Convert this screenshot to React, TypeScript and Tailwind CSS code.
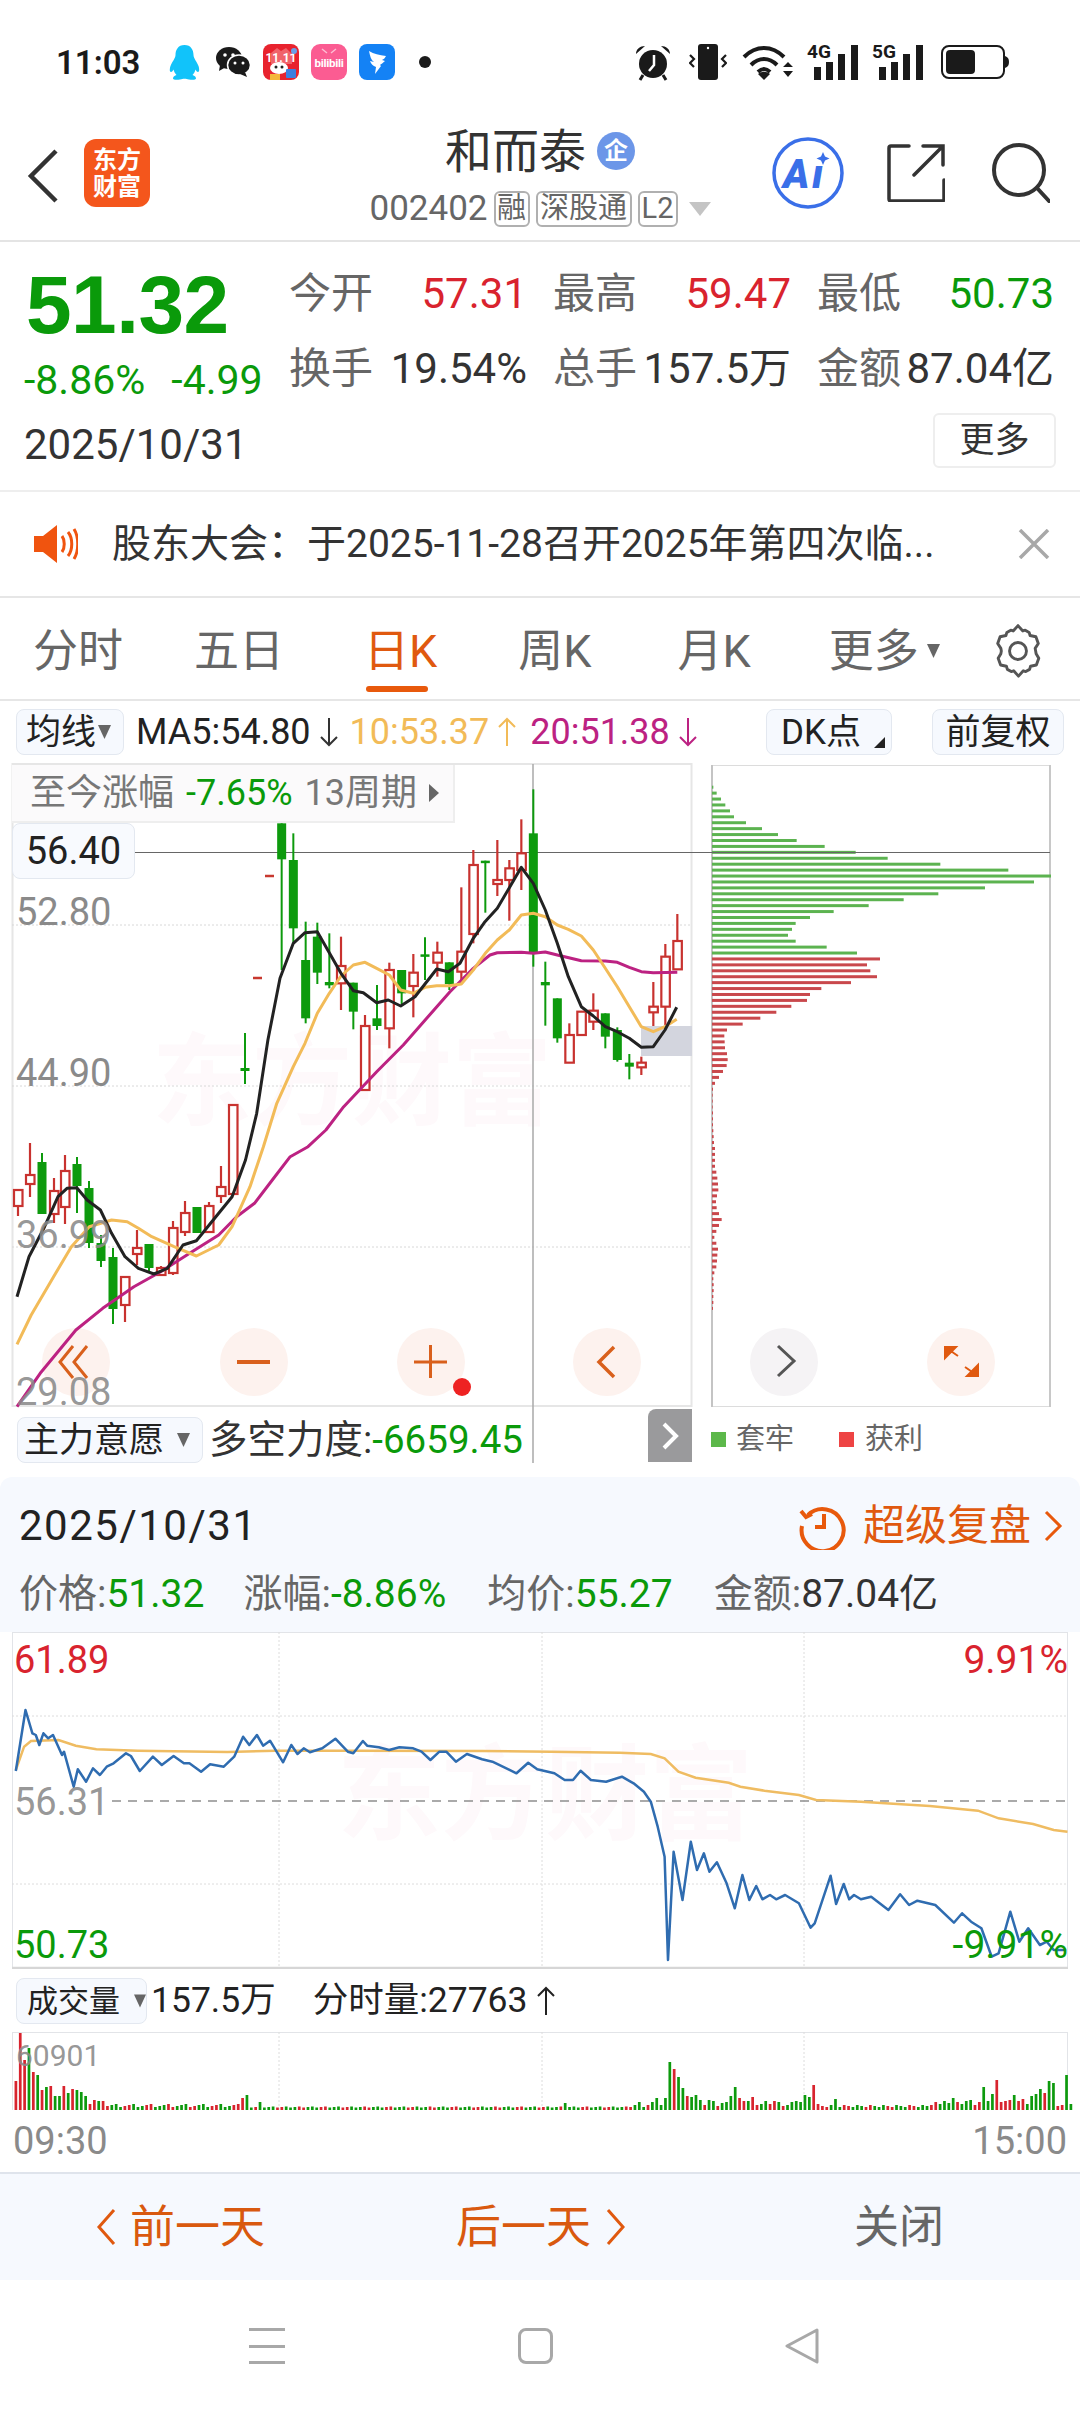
import React from 'react';

type Pt = number[];

// flat [x, y, x, y...] lists -> svg polyline points, with scale/offset per axis
const pts = (a: Pt, sx: number, ox: number, sy: number, oy: number) => {
  const out: string[] = [];
  for (let i = 0; i < a.length; i += 2) {
    out.push(`${(ox + a[i] / sx).toFixed(1)},${(oy + a[i + 1] / sy).toFixed(1)}`);
  }
  return out.join(' ');
};
const mainA = (a: Pt) => pts(a, 2.24, 0, 3, 1000);
const mainB = (a: Pt) => pts(a, 3, 260, 3, 780);
const day = (a: Pt) => pts(a, 1.452, 0, 3, 1480);

const ma5 =
  mainA([38, 890, 65, 770, 100, 680, 130, 590, 150, 565, 172, 563, 195, 600, 225, 630, 250, 700, 280, 770, 310, 805, 345, 822, 375, 805, 410, 735, 440, 722, 490, 640, 520, 590, 550, 480, 575, 340, 600, 120]) +
  ' ' +
  mainB([60, 595, 100, 490, 135, 458, 172, 455, 243, 580, 280, 632, 310, 638, 350, 668, 385, 660, 422, 678, 465, 650, 530, 567, 565, 575, 600, 550, 640, 475, 675, 425, 712, 385, 784, 262, 820, 310, 856, 390, 892, 490, 925, 590, 964, 680, 1000, 708, 1036, 740, 1072, 755, 1108, 775, 1144, 802, 1180, 800, 1215, 750, 1250, 682]);
const ma10 =
  mainA([38, 1033, 70, 945, 120, 830, 160, 740, 200, 680, 250, 660, 285, 665, 310, 685, 340, 710, 390, 740, 440, 768, 490, 735, 520, 680, 560, 560, 590, 440, 620, 310]) +
  ' ' +
  mainB([100, 860, 135, 790, 172, 700, 208, 640, 243, 588, 280, 555, 315, 547, 350, 565, 388, 585, 422, 630, 460, 640, 495, 622, 530, 617, 568, 617, 604, 612, 640, 570, 676, 520, 712, 480, 748, 450, 784, 405, 820, 400, 856, 410, 892, 435, 925, 448, 964, 468, 1000, 510, 1036, 565, 1072, 620, 1108, 680, 1144, 740, 1180, 755, 1215, 740, 1250, 718]);
const ma20 =
  mainA([38, 1220, 90, 1120, 170, 990, 230, 925, 300, 860, 360, 815, 430, 755, 490, 705, 530, 650, 570, 610, 610, 540, 650, 470, 690, 440, 730, 390, 770, 320]) +
  ' ' +
  mainB([350, 875, 430, 795, 500, 715, 570, 635, 640, 565, 690, 525, 712, 518, 784, 517, 820, 520, 856, 516, 892, 525, 964, 542, 1036, 543, 1072, 547, 1108, 562, 1144, 575, 1180, 578, 1252, 577]);

// [x, bodyTop, bodyBottom, wickTop, wickBottom, red?]
const firstCandles: number[][] = [
  [18, 1190, 1206, 1190, 1216, 1], [30, 1175, 1184, 1143, 1197, 1], [42, 1162, 1214, 1153, 1214, 0],
  [54, 1191, 1214, 1178, 1223, 1], [65, 1171, 1207, 1155, 1224, 1], [77, 1164, 1186, 1157, 1213, 0],
  [89, 1188, 1243, 1181, 1248, 0], [101, 1243, 1261, 1235, 1267, 0], [113, 1257, 1309, 1248, 1324, 0],
  [125, 1277, 1305, 1277, 1322, 1], [137, 1248, 1254, 1230, 1265, 1], [149, 1244, 1268, 1244, 1271, 0],
  [161, 1268, 1275, 1266, 1275, 1], [173, 1228, 1273, 1221, 1275, 1], [185, 1213, 1232, 1201, 1236, 1],
  [197, 1207, 1233, 1207, 1233, 0], [209, 1206, 1232, 1202, 1233, 1], [221, 1187, 1196, 1166, 1203, 1],
  [233, 1105, 1194, 1105, 1194, 1], [245, 1068, 1071, 1033, 1084, 0],
];
const laterCandles: number[][] = [
  [65, 130, 238, 130, 570, 0], [100, 240, 445, 160, 490, 0], [137, 540, 715, 425, 730, 0], [172, 470, 578, 428, 612, 0],
  [208, 606, 616, 460, 625, 0], [243, 558, 610, 470, 690, 1], [280, 608, 695, 608, 748, 0], [315, 738, 930, 705, 930, 1],
  [351, 715, 738, 615, 750, 0], [388, 570, 745, 548, 805, 1], [425, 570, 640, 570, 672, 0], [460, 578, 618, 522, 712, 1],
  [495, 523, 530, 472, 600, 0], [532, 518, 548, 485, 590, 1], [568, 547, 612, 547, 630, 0], [604, 515, 575, 322, 600, 1],
  [640, 255, 462, 210, 490, 1], [676, 242, 248, 242, 398, 0], [712, 300, 312, 180, 348, 1], [748, 265, 300, 240, 422, 1],
  [784, 220, 270, 118, 330, 1], [820, 160, 520, 28, 560, 0], [856, 606, 616, 545, 737, 0], [892, 655, 775, 655, 788, 0],
  [928, 765, 848, 730, 848, 1], [964, 695, 765, 695, 765, 1], [1000, 692, 725, 640, 750, 1], [1036, 700, 770, 700, 805, 0],
  [1072, 750, 840, 742, 845, 0], [1108, 848, 860, 822, 898, 0], [1144, 848, 862, 830, 885, 1], [1180, 680, 697, 606, 738, 1],
  [1216, 530, 680, 492, 735, 1], [1252, 483, 568, 402, 570, 1],
];
const candles = [
  ...firstCandles,
  ...laterCandles.map((c) => [260 + c[0] / 3, 780 + c[1] / 3, 780 + c[2] / 3, 780 + c[3] / 3, 780 + c[4] / 3, c[5]]),
];

// chip distribution, right end of each bar
const chipsGreen = [187, 197, 210, 223, 237, 249, 285, 333, 381, 437, 521, 614, 710, 868, 1072, 1200, 1149, 1002, 862, 758, 653, 548, 477, 434, 423, 411, 434, 527, 618];
const chipsRed = [687, 648, 658, 678, 600, 511, 477, 468, 421, 376, 328, 275, 228, 220, 221, 222, 228, 230, 227, 216, 204, 192, 186, 185, 185, 185, 186, 186, 186, 187, 188, 189, 192, 192, 192, 192, 196, 199, 201, 202, 198, 195, 197, 204, 212, 204, 196, 190, 196, 201, 199, 198, 196, 190, 187, 188, 188, 187, 187, 186];
const chips = [...chipsGreen.map((v) => ({ v, red: false })), ...chipsRed.map((v) => ({ v, red: true }))];

const priceLine = [23, 873, 37, 690, 47, 760, 52, 765, 57, 795, 63, 760, 70, 775, 77, 765, 90, 825, 93, 815, 107, 920, 113, 868, 125, 905, 135, 865, 145, 885, 155, 860, 165, 850, 183, 820, 190, 828, 203, 873, 222, 830, 235, 855, 252, 828, 267, 850, 275, 850, 292, 875, 305, 853, 325, 860, 340, 830, 353, 770, 362, 795, 373, 765, 382, 797, 392, 782, 411, 847, 423, 795, 432, 822, 441, 805, 450, 817, 468, 805, 487, 776, 505, 815, 513, 820, 527, 783, 533, 797, 550, 802, 565, 810, 580, 802, 600, 805, 612, 815, 625, 840, 638, 815, 648, 815, 662, 845, 678, 822, 700, 838, 715, 845, 750, 880, 767, 848, 780, 868, 805, 880, 820, 900, 832, 900, 843, 872, 858, 900, 880, 905, 903, 890, 920, 910, 935, 935, 945, 965, 955, 1040, 965, 1130, 970, 1440, 978, 1115, 991, 1260, 1003, 1085, 1012, 1170, 1022, 1120, 1030, 1175, 1041, 1147, 1055, 1210, 1067, 1285, 1078, 1185, 1088, 1260, 1098, 1218, 1107, 1258, 1118, 1245, 1127, 1258, 1140, 1245, 1160, 1270, 1177, 1343, 1183, 1330, 1206, 1187, 1214, 1272, 1225, 1212, 1233, 1258, 1240, 1245, 1250, 1258, 1265, 1250, 1290, 1290, 1307, 1243, 1320, 1275, 1332, 1262, 1358, 1275, 1385, 1328, 1397, 1300, 1410, 1325, 1425, 1345, 1440, 1430, 1450, 1420, 1467, 1295, 1480, 1385, 1493, 1345, 1510, 1395, 1520, 1385, 1530, 1410, 1548, 1410];
const avgLine = [23, 870, 35, 800, 45, 783, 85, 780, 110, 797, 140, 808, 200, 812, 330, 816, 400, 812, 500, 812, 700, 813, 800, 815, 900, 818, 945, 822, 965, 835, 985, 875, 1010, 893, 1058, 908, 1075, 920, 1110, 932, 1160, 945, 1185, 960, 1250, 965, 1350, 978, 1420, 992, 1450, 1015, 1500, 1032, 1530, 1050, 1550, 1055];

// minute volume: the spikes are listed, the quiet minutes are filled in
const volPeaks: [number, number, number][] = [
  [23, 29, 1], [30, 77, 1], [36, 50, 1], [43, 62, 0], [49, 38, 1], [55, 35, 0], [61, 20, 1], [67, 23, 0], [73, 24, 1], [80, 14, 0], [86, 14, 0], [92, 24, 1], [98, 17, 0], [105, 21, 1], [111, 20, 0], [118, 18, 0], [124, 14, 0], [130, 6, 1], [136, 10, 1], [142, 9, 0], [148, 9, 1],
  [355, 12, 1], [361, 15, 0], [378, 8, 0], [820, 7, 0], [930, 8, 0], [945, 8, 0], [952, 12, 0], [965, 12, 0], [971, 48, 0], [977, 41, 1], [983, 33, 0], [990, 22, 0], [996, 14, 1], [1003, 13, 0], [1009, 15, 0], [1016, 10, 0], [1022, 5, 1], [1028, 10, 0], [1035, 9, 0], [1041, 4, 1], [1047, 7, 0], [1054, 8, 0], [1060, 14, 0], [1067, 23, 0], [1073, 12, 1], [1079, 9, 1], [1086, 9, 0], [1092, 13, 1], [1098, 5, 1], [1105, 6, 0], [1111, 9, 0], [1117, 6, 1], [1124, 9, 1], [1130, 8, 0], [1136, 4, 1], [1143, 5, 0], [1149, 8, 0], [1155, 9, 0], [1161, 8, 0], [1168, 15, 0], [1174, 13, 0], [1181, 25, 1], [1187, 6, 1], [1213, 11, 0],
  [1385, 12, 0], [1410, 10, 0], [1430, 23, 0], [1442, 16, 0], [1448, 30, 1], [1455, 8, 1], [1461, 9, 1], [1467, 10, 1], [1474, 15, 0], [1480, 9, 1], [1486, 11, 1], [1499, 14, 0], [1505, 16, 0], [1511, 21, 0], [1517, 17, 1], [1524, 29, 0], [1530, 27, 0], [1536, 4, 1], [1549, 35, 0],
];
const volBars = Array.from({ length: 243 }, (_, i) => {
  const zx = 23 + i * 6.33;
  const hit = volPeaks.find((p) => Math.abs(p[0] - zx) < 3.2);
  if (hit) return { x: zx / 1.452, h: hit[1], red: hit[2] === 1 };
  const h = zx < 350 ? 3 + ((i * 37) % 4) : zx < 910 ? 2.5 + ((i * 13) % 3) * 0.5 : zx < 1350 ? 3 + ((i * 17) % 3) : 5 + ((i * 23) % 5);
  return { x: zx / 1.452, h, red: (i * 11) % 5 < 2 };
});

const Caret = ({ className = '' }: { className?: string }) => (
  <svg width="13" height="14" viewBox="0 0 13 14" className={className}>
    <path d="M0 0h13L6.5 14z" fill="#666" />
  </svg>
);

const Arrow = ({ color, up }: { color: string; up?: boolean }) => (
  <svg width="20" height="30" viewBox="0 0 20 30" className="ml-[8px] shrink-0">
    <path d={up ? 'M10 29V2M2 10l8-8 8 8' : 'M10 1v27M2 20l8 8 8-8'} fill="none" stroke={color} strokeWidth="2" />
  </svg>
);

const StatusLeft = () => (
  <div className="flex items-center">
    {/* QQ */}
    <svg width="31" height="35" viewBox="0 0 31 35" className="ml-[28px]">
      <path d="M15.5 0C9 0 6.5 5 6.5 10c0 3-3.5 7-5 11-1 3-1 6 .5 6 1 0 2-1.5 2.5-2.500.5 2 1.500 4 3 5.500C5 31 4 32 4 33.500 4 35 8 35 11 34.500c2-.3 2.700-.8 4.500-.8s2.500.5 4.500.8c3 .5 7 .5 7-1 0-1.500-1-2.500-3.500-3.500 1.500-1.500 2.500-3.500 3-5.500.5 1 1.500 2.500 2.500 2.500 1.500 0 1.500-3 .5-6-1.500-4-5-8-5-11C24.500 5 22 0 15.500 0z" fill="#11c3fa" />
    </svg>
    {/* WeChat */}
    <svg width="34" height="30" viewBox="0 0 34 30" className="ml-[16px]">
      <ellipse cx="13" cy="11" rx="13" ry="11" fill="#1a1a1a" />
      <path d="M4 18l-1 6 7-4z" fill="#1a1a1a" />
      <ellipse cx="23" cy="18" rx="11.500" ry="10" fill="#1a1a1a" stroke="#fff" strokeWidth="1.500" />
      <path d="M29 25l2 5-7-3z" fill="#1a1a1a" />
      <circle cx="9" cy="8" r="1.800" fill="#fff" />
      <circle cx="17" cy="8" r="1.800" fill="#fff" />
      <circle cx="19" cy="16" r="1.500" fill="#fff" />
      <circle cx="27" cy="16" r="1.500" fill="#fff" />
    </svg>
    {/* shopping festival app */}
    <svg width="36" height="36" viewBox="0 0 36 36" className="ml-[13px]">
      <rect width="36" height="36" rx="8" fill="#e8232e" />
      <path d="M8 9l6-5 4 3 5-3 6 6v10H8z" fill="#f0636a" />
      <text x="18" y="18" textAnchor="middle" fontSize="12" fontWeight="700" fill="#fff" fontFamily="Roboto">11.11</text>
      <ellipse cx="16" cy="24" rx="9" ry="6" fill="#fff" />
      <circle cx="13" cy="23" r="1.500" fill="#222" />
      <circle cx="19" cy="23" r="1.500" fill="#222" />
      <rect x="23" y="25" width="10" height="9" rx="1" fill="#3d7fe0" />
      <rect x="7" y="30" width="10" height="6" fill="#f4b73a" />
      <circle cx="31" cy="7" r="3" fill="#6aa0e8" />
    </svg>
    {/* bilibili */}
    <svg width="36" height="36" viewBox="0 0 36 36" className="ml-[12px]">
      <rect width="36" height="36" rx="9" fill="#fb5c92" />
      <path d="M11 5l5 4M25 5l-5 4" stroke="#fff" strokeOpacity=".6" strokeWidth="1.500" />
      <text x="18" y="23" textAnchor="middle" fontSize="11.500" fontWeight="700" fill="#fff" fontFamily="Roboto" letterSpacing="-.3">bilibili</text>
    </svg>
    {/* blue wing app */}
    <svg width="36" height="36" viewBox="0 0 36 36" className="ml-[12px]">
      <rect width="36" height="36" rx="8" fill="#1482f5" />
      <path d="M10 7c5 3 10 4 17 5-1 2-2 3-4 4l3 1c-2 2-4 3-5 4l1 1-6 8 1-7c-3-1-5-3-6-6 1 0 3 1 4 1-3-2-4-6-5-11z" fill="#fff" />
    </svg>
    <span className="ml-[24px] h-[12px] w-[12px] rounded-full bg-[#1a1a1a]" />
  </div>
);

const StatusRight = () => (
  <div className="flex items-center">
    {/* alarm */}
    <svg width="38" height="38" viewBox="0 0 38 38">
      <circle cx="19" cy="21" r="14" fill="#1a1a1a" />
      <path d="M2 11c0-5 4-8 9-8zM36 11c0-5-4-8-9-8z" fill="#1a1a1a" />
      <path d="M9 32l-3 5M29 32l3 5" stroke="#1a1a1a" strokeWidth="3" />
      <path d="M20 12v10l-5 6" stroke="#fff" strokeWidth="2.500" fill="none" />
    </svg>
    {/* vibrate */}
    <svg width="38" height="36" viewBox="0 0 38 36" className="ml-[17px]">
      <rect x="9" y="0" width="20" height="36" rx="3" fill="#1a1a1a" />
      <circle cx="19" cy="4" r="1.200" fill="#fff" />
      <path d="M1 11l4 4-4 4 4 4M37 11l-4 4 4 4-4 4" stroke="#1a1a1a" strokeWidth="2.200" fill="none" />
    </svg>
    {/* wifi */}
    <svg width="52" height="38" viewBox="0 0 52 38" className="ml-[15px]">
      <path d="M2 14C14 2 30 2 42 14M9 22c8-8 18-8 26 0M16 29c4-4 8-4 12 0" stroke="#1a1a1a" strokeWidth="4" fill="none" />
      <path d="M22 37l-6-6c4-3 8-3 12 0z" fill="#1a1a1a" />
      <path d="M41 24h10l-5-5zM41 28h10l-5 6z" fill="#1a1a1a" />
    </svg>
    {/* 4G */}
    <svg width="52" height="38" viewBox="0 0 52 38" className="ml-[13px] overflow-visible">
      <text x="0" y="15" fontSize="18" fontWeight="700" fontFamily="Roboto" fill="#1a1a1a" textLength="24" lengthAdjust="spacingAndGlyphs">4G</text>
      <path d="M7 37V24h7v13zM19 37V19h7v18zM31 37V11h7v26zM44 37V2h7v35z" fill="#1a1a1a" />
    </svg>
    {/* 5G */}
    <svg width="52" height="38" viewBox="0 0 52 38" className="ml-[13px] overflow-visible">
      <text x="0" y="15" fontSize="18" fontWeight="700" fontFamily="Roboto" fill="#1a1a1a" textLength="24" lengthAdjust="spacingAndGlyphs">5G</text>
      <path d="M7 37V24h7v13zM19 37V19h7v18zM31 37V11h7v26zM44 37V2h7v35z" fill="#1a1a1a" />
    </svg>
    {/* battery */}
    <svg width="68" height="34" viewBox="0 0 68 34" className="ml-[17px]">
      <rect x="1" y="1" width="62" height="32" rx="7" fill="none" stroke="#1a1a1a" strokeWidth="2" />
      <rect x="5" y="5" width="29" height="24" rx="4" fill="#1a1a1a" />
      <path d="M64 11c3 1 4 3 4 6s-1 5-4 6z" fill="#1a1a1a" />
    </svg>
  </div>
);

const MainChart = () => (
  <svg width="1080" height="644" viewBox="0 763 1080 644" className="absolute left-0 top-0 overflow-visible">
    <rect x="12.500" y="764" width="679" height="642" fill="none" stroke="#e6e6e6" strokeWidth="2" />
    <rect x="711.500" y="765.500" width="338" height="641" fill="none" stroke="#dcdcdc" />
    <path d="M1050 765v642" stroke="#c8c8c8" strokeWidth="2" />
    <path d="M712 765v642" stroke="#c4c4c4" strokeWidth="2" />
    <path d="M12 925h680M12 1086h680M12 1247h680" stroke="#d8d8d8" strokeDasharray="2 2" />
    <rect x="641" y="1026" width="51" height="30" fill="#d3d5de" />

    {/* zoom buttons */}
    <circle cx="76" cy="1362" r="34" fill="#fdf2ee" />
    <circle cx="254" cy="1362" r="34" fill="#fdf2ee" />
    <circle cx="431" cy="1362" r="34" fill="#fdf2ee" />
    <circle cx="607" cy="1362" r="34" fill="#fdf2ee" />
    <circle cx="784" cy="1362" r="34" fill="#f5f3f5" />
    <circle cx="961" cy="1362" r="34" fill="#fdf2ee" />
    <path d="M73 1346l-13 16 13 16M87 1346l-13 16 13 16" fill="none" stroke="#d9601c" strokeWidth="3" />
    <path d="M237 1362h33" stroke="#d9601c" strokeWidth="4" />
    <path d="M414 1362h33M430.500 1345v33" stroke="#d9601c" strokeWidth="3" />
    <path d="M614 1347l-15 15 15 15" fill="none" stroke="#d9601c" strokeWidth="3.500" />
    <path d="M778 1346l16 15-16 15" fill="none" stroke="#555" strokeWidth="3" />
    <path d="M945 1347l13 9M945 1347v11l11-11zM978 1376l-13-9M978 1376v-11l-11 11z" fill="#e0590f" stroke="#e0590f" strokeWidth="2" />
    <circle cx="462" cy="1387" r="9" fill="#ee2222" />

    {chips.map((c, i) => {
      const y = 740 + (100 + i * 12.55) / 2.119;
      return (
        <rect key={i} x="712" y={y - 1.500} width={(c.v - 183) / 3} height="3" fill={c.red ? '#c9484c' : '#5cb350'} />
      );
    })}

    <path d="M135 852.500h915" stroke="#666" strokeWidth="1" />
    <path d="M533 764v699" stroke="#a8a8a8" strokeWidth="1.500" />
    <path d="M253 978h9M265 876h9" stroke="#c8382f" strokeWidth="2.500" />

    {candles.map((c, i) => {
      const [x, top, bot, wt, wb, red] = c;
      return red ? (
        <g key={i} stroke="#c8322f" strokeWidth="2.200">
          <path d={`M${x} ${wt}V${wb}`} />
          <rect x={x - 4} y={top} width="8.500" height={bot - top} fill="#fff" />
        </g>
      ) : (
        <g key={i}>
          <path d={`M${x} ${wt}V${wb}`} stroke="#0d9a0d" strokeWidth="2" />
          <rect x={x - 4.500} y={top} width="9" height={Math.max(bot - top, 2.500)} fill="#0d9a0d" />
        </g>
      );
    })}
    <polyline points={ma20} fill="none" stroke="#bc2282" strokeWidth="3" strokeLinejoin="round" />
    <polyline points={ma10} fill="none" stroke="#f2bb58" strokeWidth="3" strokeLinejoin="round" />
    <polyline points={ma5} fill="none" stroke="#222" strokeWidth="3" strokeLinejoin="round" />
  </svg>
);

const DayChart = () => (
  <svg width="1080" height="337" viewBox="0 1632 1080 337" className="absolute left-0 top-0">
    <rect x="12.500" y="1632.500" width="1055" height="335" fill="none" stroke="#e2e4e8" />
    <path d="M12 1968h1056" stroke="#d6d6d6" strokeWidth="2.500" />
    <path d="M279 1632v336M542 1632v336M804 1632v336M12 1716h1056M12 1884h1056" stroke="#dcdcdc" strokeDasharray="2 2" />
    <path d="M112 1801h955" stroke="#8f8f8f" strokeWidth="1.500" strokeDasharray="9 7" />
    <polyline points={day(avgLine)} fill="none" stroke="#efbc62" strokeWidth="2.500" />
    <polyline points={day(priceLine)} fill="none" stroke="#2f6cb0" strokeWidth="2.500" strokeLinejoin="round" />
  </svg>
);

const VolumeChart = () => (
  <svg width="1080" height="78" viewBox="0 2032 1080 78" className="absolute left-0 top-0">
    <rect x="12.500" y="2032.500" width="1055" height="78" fill="none" stroke="#e2e4e8" />
    <path d="M279 2032v78M542 2032v78M804 2032v78" stroke="#dcdcdc" strokeDasharray="2 2" />
    {volBars.map((b, i) => (
      <rect key={i} x={b.x - 1.300} y={2110 - b.h} width="2.700" height={b.h} fill={b.red ? '#d8242e' : '#0d9a0d'} />
    ))}
  </svg>
);

const Btn = ({ children, className = '' }: { children: React.ReactNode; className?: string }) => (
  <div className={`flex items-center rounded-lg border border-[#e3e8f0] bg-[#f6f9fe] ${className}`}>{children}</div>
);

export default function App() {
  return (
    <div className="relative flex h-[2412px] w-[1080px] flex-col overflow-hidden whitespace-nowrap bg-white leading-none text-[#222] [font-family:Roboto,'Noto_Sans_CJK_SC',sans-serif]">
      {/* status bar */}
      <div className="flex h-[100px] shrink-0 items-center justify-between pl-[56px] pr-[71px] pt-[24px]">
        <div className="flex items-center">
          <span className="w-[85px] text-[33px] font-semibold text-[#1a1a1a]">11:03</span>
          <StatusLeft />
        </div>
        <StatusRight />
      </div>

      {/* title bar */}
      <div className="grid h-[142px] shrink-0 grid-cols-[1fr_auto_1fr] items-center border-b-2 border-[#e4e4e4]">
        <div className="flex items-center pl-[27px] pt-[6px]">
          <svg width="32" height="54" viewBox="0 0 32 54" className="mt-[6px]">
            <path d="M29 2L4 27l25 25" fill="none" stroke="#333" strokeWidth="4.500" />
          </svg>
          <div className="ml-[25px] flex h-[68px] w-[66px] flex-col items-center justify-center gap-[3px] rounded-[12px] bg-[#f4561c] text-[24px] font-bold text-white">
            <span>东方</span>
            <span>财富</span>
          </div>
        </div>
        <div className="flex flex-col items-center pt-[14px]">
          <div className="flex items-center">
            <span className="text-[47px] text-[#333]">和而泰</span>
            <span className="ml-[11px] flex h-[38px] w-[38px] items-center justify-center rounded-full bg-[#6c96e8] text-[24px] font-bold text-white">企</span>
          </div>
          <div className="mt-[16px] flex items-center text-[#666]">
            <span className="text-[35px]">002402</span>
            <span className="ml-[6px] flex h-[36px] w-[36px] items-center justify-center rounded-md border-2 border-[#b0b0b0] text-[29px]">融</span>
            <span className="ml-[6px] flex h-[36px] w-[96px] items-center justify-center rounded-md border-2 border-[#b0b0b0] text-[29px]">深股通</span>
            <span className="ml-[6px] flex h-[36px] w-[40px] items-center justify-center rounded-md border-2 border-[#b0b0b0] text-[29px]">L2</span>
            <svg width="22" height="14" viewBox="0 0 22 14" className="ml-[11px]">
              <path d="M0 0h22L11 14z" fill="#c4c4c4" />
            </svg>
          </div>
        </div>
        <div className="flex items-center justify-end pr-[30px] pt-[6px]">
          <svg width="72" height="72" viewBox="0 0 72 72">
            <circle cx="36" cy="36" r="34" fill="none" stroke="#3a6fe8" strokeWidth="3.500" />
            <text x="11" y="51" fontSize="40" fontWeight="900" fontStyle="italic" fill="#3a6fe8" fontFamily="Roboto">A</text>
            <text x="40" y="51" fontSize="40" fontWeight="900" fontStyle="italic" fill="#3a6fe8" fontFamily="Roboto">ı</text>
            <path d="M51 15l2 4.500 4.500 2-4.500 2-2 4.500-2-4.500-4.500-2 4.500-2z" fill="#3a6fe8" />
          </svg>
          <svg width="58" height="58" viewBox="0 0 58 58" className="ml-[43px]">
            <path d="M22 2H4a2 2 0 0 0-2 2v51a2 2 0 0 0 2 2h51a2 2 0 0 0 2-2V36M27 31L55 3M36 2h20v19" fill="none" stroke="#333" strokeWidth="3.500" strokeLinecap="round" />
          </svg>
          <svg width="58" height="60" viewBox="0 0 58 60" className="ml-[47px]">
            <circle cx="27" cy="27" r="25" fill="none" stroke="#333" strokeWidth="4" />
            <path d="M45 45l12 13" stroke="#333" strokeWidth="4" strokeLinecap="round" />
          </svg>
        </div>
      </div>

      {/* quote */}
      <div className="relative flex h-[250px] shrink-0 border-b-2 border-[#eeeeee]">
        <div className="w-[289px] shrink-0 pl-[24px]">
          <div className="ml-[2px] mt-[22px] text-[82px] font-bold tracking-[-0.5px] text-[#0a9a0a] [font-family:'Liberation_Sans',sans-serif]">51.32</div>
          <div className="mt-[14px] flex text-[41px] text-[#0a9a0a]">
            <span>-8.86%</span>
            <span className="ml-[26px]">-4.99</span>
          </div>
          <div className="mt-[23px] text-[42px] text-[#333]">2025/10/31</div>
        </div>
        <div className="pt-[31px]">
          <div className="grid grid-cols-[264px_264px_237px] text-[42px] text-[#666]">
            <div className="flex justify-between pr-[26px]"><span>今开</span><span className="text-[#d9232e]">57.31</span></div>
            <div className="flex justify-between pr-[26px]"><span>最高</span><span className="text-[#d9232e]">59.47</span></div>
            <div className="flex justify-between"><span>最低</span><span className="text-[#0a9a0a]">50.73</span></div>
          </div>
          <div className="mt-[33px] grid grid-cols-[264px_264px_237px] text-[42px] text-[#666]">
            <div className="flex justify-between pr-[26px]"><span>换手</span><span className="text-[#333]">19.54%</span></div>
            <div className="flex justify-between pr-[26px]"><span>总手</span><span className="text-[#333]">157.5万</span></div>
            <div className="flex justify-between"><span>金额</span><span className="text-[#333]">87.04亿</span></div>
          </div>
        </div>
        <div className="absolute left-[933px] top-[171px] flex h-[55px] w-[123px] items-center justify-center rounded-md border-2 border-[#eeeeee] text-[35px] text-[#333]">更多</div>
      </div>

      {/* notice */}
      <div className="flex h-[106px] shrink-0 items-center border-b-2 border-[#e6e6e6] pl-[34px] pr-[30px]">
        <svg width="44" height="38" viewBox="0 0 44 38">
          <path d="M0 11h9L23 0v38L9 27H0z" fill="#f0540f" />
          <path d="M28 11c3 4 3 12 0 16M34 7c5 6 5 18 0 24M40 4c5 8 5 22 0 30" fill="none" stroke="#f0540f" strokeWidth="3" />
        </svg>
        <span className="ml-[34px] text-[39px] text-[#333]">股东大会：于2025-11-28召开2025年第四次临...</span>
        <svg width="32" height="30" viewBox="0 0 32 30" className="ml-auto">
          <path d="M2 1l28 28M30 1L2 29" stroke="#a8a8a8" strokeWidth="3.500" />
        </svg>
      </div>

      {/* period tabs */}
      <div className="flex h-[103px] shrink-0 items-center border-b-2 border-[#e6e6e6] pl-[33px] pt-[5px] text-[45px] text-[#666]">
        <span>分时</span>
        <span className="ml-[71px]">五日</span>
        <span className="relative ml-[80px] text-[#e0590f]">
          日K
          <span className="absolute left-[2px] top-[57px] h-[6px] w-[62px] rounded-full bg-[#e8590c]" />
        </span>
        <span className="ml-[81px]">周K</span>
        <span className="ml-[86px]">月K</span>
        <span className="ml-[78px]">更多</span>
        <Caret className="ml-[8px]" />
        <svg width="58" height="58" viewBox="0 0 24 24" className="ml-auto mr-[33px]" fill="none" stroke="#555" strokeWidth="1.200" strokeLinejoin="round">
          <path d="M12 1.500l2 2.200 1-.3 1.600.9.400 1.300 2.400.5 1 2.800-1.300 2 .2 1.100.2 1.100 1.100 1.900-1 2.800-2.400.5-.4 1.300-1.600.9-1-.3-2 2.200-2-2.200-1 .3-1.600-.9-.4-1.300-2.400-.5-1-2.800 1.100-1.900.2-1.100-.2-1.100-1.300-2 1-2.800 2.400-.5.400-1.300 1.600-.9 1 .3z" />
          <circle cx="12" cy="12" r="3.500" />
        </svg>
      </div>

      {/* MA row */}
      <div className="flex h-[62px] shrink-0 items-center pl-[16px] pr-[16px] text-[36px]">
        <Btn className="h-[46px] w-[108px] pl-[9px]">
          <span className="text-[35px] text-[#222]">均线</span>
          <Caret className="ml-[2px]" />
        </Btn>
        <span className="ml-[12px]">MA5:54.80</span>
        <Arrow color="#333" />
        <span className="ml-[11px] text-[#f2bb58]">10:53.37</span>
        <Arrow color="#f2bb58" up />
        <span className="ml-[13px] text-[#bc2282]">20:51.38</span>
        <Arrow color="#bc2282" />
        <Btn className="relative ml-auto h-[46px] w-[126px] justify-center pr-[16px]">
          <span className="text-[35px]">DK点</span>
          <span className="absolute bottom-[6px] right-[6px] h-0 w-0 border-b-[11px] border-l-[11px] border-b-[#222] border-l-transparent" />
        </Btn>
        <Btn className="ml-[40px] h-[46px] w-[132px] justify-center">
          <span className="text-[35px]">前复权</span>
        </Btn>
      </div>

      {/* candlestick + chips */}
      <div className="relative h-[644px] w-[1080px] shrink-0">
        <div className="absolute left-[152px] top-[270px] text-[100px] font-bold text-[#fef9fb]">东方财富</div>
        <MainChart />
        <div className="absolute left-[12px] top-[2px] flex h-[58px] w-[443px] items-center border-b-2 border-r-2 border-[#eeeeee] bg-[#fbfafb] pl-[18px] text-[36px] text-[#777]">
          <span>至今涨幅</span>
          <span className="ml-[12px] text-[#0a9a0a]">-7.65%</span>
          <span className="ml-[12px]">13周期</span>
          <svg width="10" height="18" viewBox="0 0 10 18" className="ml-[12px]">
            <path d="M0 0l10 9-10 9z" fill="#666" />
          </svg>
        </div>
        <div className="absolute left-[12px] top-[60px] flex h-[56px] w-[123px] items-center justify-center rounded-lg border border-[#e3e8f0] bg-[#f8fafe] text-[38px] text-[#222]">56.40</div>
        <span className="absolute left-[16px] top-[130px] text-[38px] text-[#8a8a8a]">52.80</span>
        <span className="absolute left-[16px] top-[291px] text-[38px] text-[#8a8a8a]">44.90</span>
        <span className="absolute left-[16px] top-[453px] text-[38px] text-[#8a8a8a]/90">36.99</span>
        <span className="absolute left-[16px] top-[610px] text-[38px] text-[#8a8a8a]/90">29.08</span>
      </div>

      {/* sub indicator row */}
      <div className="flex h-[70px] shrink-0 items-start pl-[17px]">
        <Btn className="mt-[10px] h-[46px] w-[186px] pl-[6px]">
          <span className="text-[35px]">主力意愿</span>
          <Caret className="ml-[13px]" />
        </Btn>
        <span className="ml-[6px] mt-[14px] text-[38.500px] text-[#333]">多空力度:<span className="text-[#0a9a0a]">-6659.45</span></span>
        <div className="absolute left-[648px] top-[1409px] flex h-[53px] w-[44px] items-center justify-center rounded-tl-lg bg-[#9a9a9c]">
          <svg width="18" height="30" viewBox="0 0 18 30">
            <path d="M3 3l12 12L3 27" fill="none" stroke="#fff" strokeWidth="4" />
          </svg>
        </div>
        <div className="absolute left-[711px] top-[1425px] flex items-center text-[29px] text-[#666]">
          <span className="h-[15px] w-[15px] bg-[#5cb84a]" />
          <span className="ml-[10px]">套牢</span>
          <span className="ml-[45px] h-[15px] w-[15px] bg-[#ee4444]" />
          <span className="ml-[11px]">获利</span>
        </div>
      </div>

      {/* review header */}
      <div className="h-[155px] shrink-0 rounded-t-[12px] bg-[#f6f9fe] pl-[19px] pr-[17px] pt-[25px]">
        <div className="flex items-center justify-between">
          <span className="text-[42px] tracking-[1.500px] text-[#222]">2025/10/31</span>
          <div className="flex items-center text-[#e0590f]">
            <svg width="48" height="48" viewBox="0 0 48 48">
              <path d="M9 13A21 21 0 1 1 3 24M2 9l5 6 6-3" fill="none" stroke="#e8590c" strokeWidth="4" />
              <path d="M25 12v13h-9" fill="none" stroke="#e8590c" strokeWidth="4" />
            </svg>
            <span className="ml-[16px] text-[42px]">超级复盘</span>
            <svg width="19" height="32" viewBox="0 0 19 32" className="ml-[13px]">
              <path d="M2 2l14 14L2 30" fill="none" stroke="#e8590c" strokeWidth="3" />
            </svg>
          </div>
        </div>
        <div className="mt-[25px] flex text-[39px] text-[#666]">
          <span>价格:<span className="text-[#0a9a0a]">51.32</span></span>
          <span className="ml-[39px]">涨幅:<span className="text-[#0a9a0a]">-8.86%</span></span>
          <span className="ml-[41px]">均价:<span className="text-[#0a9a0a]">55.27</span></span>
          <span className="ml-[41px]">金额:<span className="text-[#333]">87.04亿</span></span>
        </div>
      </div>

      {/* intraday */}
      <div className="relative h-[337px] w-[1080px] shrink-0">
        <div className="absolute left-[337px] top-[113px] text-[104px] font-bold text-[#fef9fb]">东方财富</div>
        <DayChart />
        <span className="absolute left-[14px] top-[9px] text-[38px] text-[#d9232e]">61.89</span>
        <span className="absolute right-[12px] top-[9px] text-[39px] text-[#d9232e]">9.91%</span>
        <span className="absolute left-[14px] top-[151px] text-[38px] text-[#8a8a8a]/90">56.31</span>
        <span className="absolute left-[14px] top-[294px] text-[38px] text-[#0a9a0a]">50.73</span>
        <span className="absolute right-[12px] top-[294px] text-[39px] text-[#0a9a0a]">-9.91%</span>
      </div>

      {/* volume header */}
      <div className="flex h-[63px] shrink-0 items-center pl-[16px] pt-[1px] text-[35.500px] text-[#222]">
        <Btn className="h-[46px] w-[131px] pl-[10px]">
          <span className="text-[31px]">成交量</span>
          <Caret className="ml-[14px]" />
        </Btn>
        <span className="ml-[4px]">157.5万</span>
        <span className="ml-[37px]">分时量:27763</span>
        <Arrow color="#222" up />
      </div>

      {/* volume bars */}
      <div className="relative h-[78px] w-[1080px] shrink-0">
        <VolumeChart />
        <span className="absolute left-[16px] top-[9px] text-[30px] text-[#8a8a8a]/90">60901</span>
      </div>

      <div className="flex h-[62px] shrink-0 items-start justify-between px-[13px] pt-[12px] text-[38px] text-[#8a8a8a]">
        <span>09:30</span>
        <span>15:00</span>
      </div>

      {/* day switch */}
      <div className="flex h-[108px] shrink-0 items-center border-t-2 border-[#dfe4ec] bg-[#f6f9fe] pl-[96px] text-[45px]">
        <svg width="20" height="38" viewBox="0 0 20 38">
          <path d="M18 2L3 19l15 17" fill="none" stroke="#e0590f" strokeWidth="3" />
        </svg>
        <span className="ml-[14px] text-[#d9590f]">前一天</span>
        <span className="ml-[191px] text-[#d9590f]">后一天</span>
        <svg width="20" height="38" viewBox="0 0 20 38" className="ml-[15px]">
          <path d="M2 2l15 17L2 36" fill="none" stroke="#e0590f" strokeWidth="3" />
        </svg>
        <span className="ml-[228px] text-[#666]">关闭</span>
      </div>

      {/* nav */}
      <div className="flex flex-1 items-start pl-[249px] pt-[48px]">
        <div className="flex h-[36px] w-[36px] flex-col justify-between">
          <span className="h-[3px] bg-[#a8a8a8]" />
          <span className="h-[3px] bg-[#a8a8a8]" />
          <span className="h-[3px] bg-[#a8a8a8]" />
        </div>
        <span className="ml-[233px] h-[36px] w-[35px] rounded-lg border-[3px] border-[#a8a8a8]" />
        <svg width="35" height="36" viewBox="0 0 35 36" className="ml-[231px]">
          <path d="M33 2L3 18l30 16z" fill="none" stroke="#a8a8a8" strokeWidth="3" strokeLinejoin="round" />
        </svg>
      </div>
    </div>
  );
}
